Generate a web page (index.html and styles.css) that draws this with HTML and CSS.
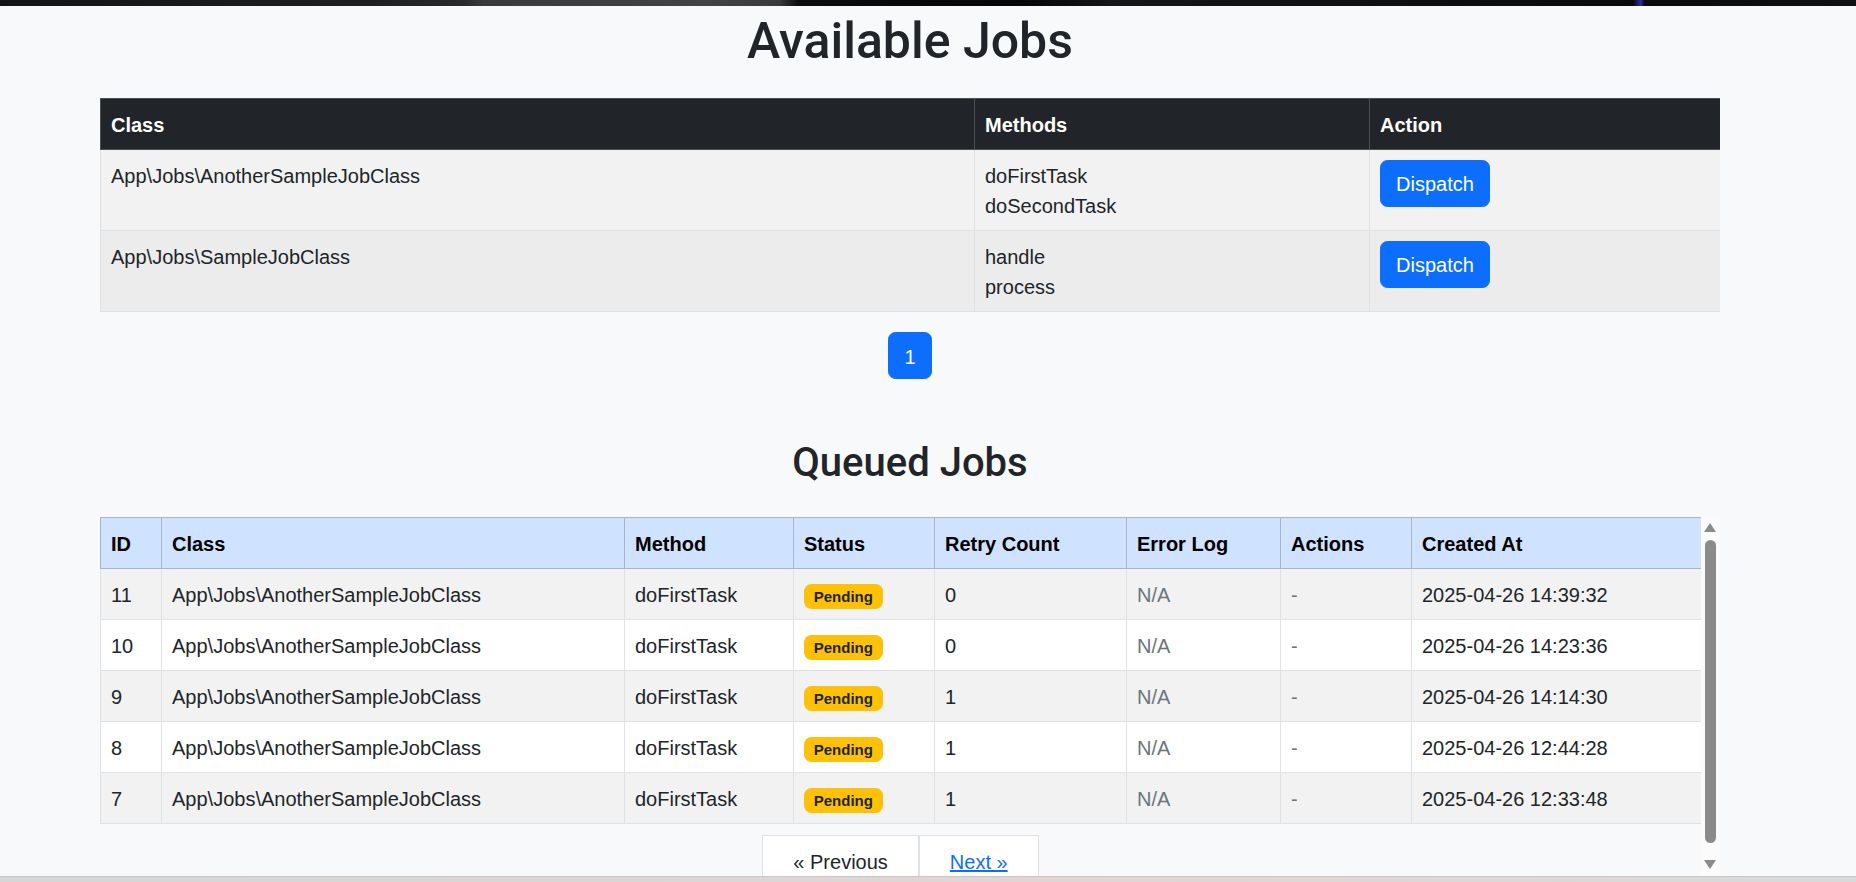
FILE: index.html
```html
<!DOCTYPE html>
<html lang="en">
<head>
<meta charset="utf-8">
<title>Jobs</title>
<link rel="stylesheet" href="styles.css">
</head>
<body>
<div class="topbar"></div>
<main class="page">
  <h1 class="title">Available Jobs</h1>
  <table class="tbl tbl-available">
    <colgroup>
      <col class="col-class">
      <col class="col-methods">
      <col class="col-action">
    </colgroup>
    <thead>
      <tr><th>Class</th><th>Methods</th><th>Action</th></tr>
    </thead>
    <tbody>
      <tr class="row-striped">
        <td>App\Jobs\AnotherSampleJobClass</td>
        <td><div>doFirstTask</div><div>doSecondTask</div></td>
        <td class="cell-action"><button class="btn-primary" type="button">Dispatch</button></td>
      </tr>
      <tr class="row-hover">
        <td>App\Jobs\SampleJobClass</td>
        <td><div>handle</div><div>process</div></td>
        <td class="cell-action"><button class="btn-primary" type="button">Dispatch</button></td>
      </tr>
    </tbody>
  </table>
  <nav class="pager">
    <span class="page-num">1</span>
  </nav>

  <h2 class="subtitle">Queued Jobs</h2>
  <div class="queue-area">
    <div class="queue-content">
      <table class="tbl tbl-queue">
        <colgroup>
          <col class="q-id">
          <col class="q-class">
          <col class="q-method">
          <col class="q-status">
          <col class="q-retry">
          <col class="q-error">
          <col class="q-actions">
          <col class="q-created">
        </colgroup>
        <thead>
          <tr><th>ID</th><th>Class</th><th>Method</th><th>Status</th><th>Retry Count</th><th>Error Log</th><th>Actions</th><th>Created At</th></tr>
        </thead>
        <tbody>
          <tr class="row-striped"><td>11</td><td>App\Jobs\AnotherSampleJobClass</td><td>doFirstTask</td><td><span class="badge">Pending</span></td><td>0</td><td class="muted">N/A</td><td class="muted">-</td><td>2025-04-26 14:39:32</td></tr>
          <tr class="row-plain"><td>10</td><td>App\Jobs\AnotherSampleJobClass</td><td>doFirstTask</td><td><span class="badge">Pending</span></td><td>0</td><td class="muted">N/A</td><td class="muted">-</td><td>2025-04-26 14:23:36</td></tr>
          <tr class="row-striped"><td>9</td><td>App\Jobs\AnotherSampleJobClass</td><td>doFirstTask</td><td><span class="badge">Pending</span></td><td>1</td><td class="muted">N/A</td><td class="muted">-</td><td>2025-04-26 14:14:30</td></tr>
          <tr class="row-plain"><td>8</td><td>App\Jobs\AnotherSampleJobClass</td><td>doFirstTask</td><td><span class="badge">Pending</span></td><td>1</td><td class="muted">N/A</td><td class="muted">-</td><td>2025-04-26 12:44:28</td></tr>
          <tr class="row-striped"><td>7</td><td>App\Jobs\AnotherSampleJobClass</td><td>doFirstTask</td><td><span class="badge">Pending</span></td><td>1</td><td class="muted">N/A</td><td class="muted">-</td><td>2025-04-26 12:33:48</td></tr>
        </tbody>
      </table>
      <nav class="simple-pager">
        <span class="sp-item sp-prev">« Previous</span>
        <a class="sp-item sp-next" href="#">Next »</a>
      </nav>
    </div>
    <div class="vscroll" aria-hidden="true">
      <div class="vs-btn vs-up"><span class="vs-arrow-up"></span></div>
      <div class="vs-track"><div class="vs-thumb"></div></div>
      <div class="vs-btn vs-down"><span class="vs-arrow-down"></span></div>
    </div>
  </div>
</main>
<div class="bottombar"></div>
</body>
</html>
```

FILE: styles.css
```css
* { box-sizing: border-box; }

html, body {
  margin: 0;
  padding: 0;
}

body {
  width: 1856px;
  height: 882px;
  overflow: hidden;
  background: #f8f9fa;
  color: #212529;
  font-family: "Segoe UI", "Liberation Sans", Arial, sans-serif;
  font-size: 20px;
  line-height: 30px;
}

.topbar {
  height: 6px;
  background: linear-gradient(90deg, #141414 0, #1f1f1f 20%, #2a2a2a 25%, #3a3a3a 26%, #434343 38%, #3a3a3a 42%, #0c0c0c 43%, #050505 55%, #161616 60%, #0a0a0a 88%, #2a2ab0 88.4%, #0a0a0a 88.6%, #111 100%);
}

.bottombar {
  height: 6px;
  background: linear-gradient(90deg, #d6d6d6 0, #dcd6d6 40%, #e2d4d4 55%, #d9d9d9 100%);
  border-top: 1px solid #c8c8c8;
}

.page {
  height: 870px;
  overflow: hidden;
  width: 1620px;
  margin-left: 100px;
  display: flex;
  flex-direction: column;
}

.title {
  margin: 5px 0 27px;
  font-family: Roboto, "Liberation Sans", sans-serif;
  font-size: 50px;
  line-height: 60px;
  font-weight: 500;
  text-align: center;
}

.subtitle {
  margin: 60px 0 30px;
  font-family: Roboto, "Liberation Sans", sans-serif;
  font-size: 40px;
  line-height: 48px;
  font-weight: 500;
  text-align: center;
}

.tbl {
  width: 100%;
  table-layout: fixed;
  border-collapse: collapse;
  border: 1px solid #dee2e6;
}

.tbl th,
.tbl td {
  padding: 11px 10px 9px;
  text-align: left;
  vertical-align: top;
  border: 1px solid #dee2e6;
  font-weight: 400;
}

.tbl th { font-weight: 700; }

.tbl td.cell-action {
  padding-top: 10px;
  padding-bottom: 10px;
}

.tbl-available thead th {
  background: #212529;
  color: #fff;
  border-color: #4d5154;
}

.col-class { width: 874px; }
.col-methods { width: 395px; }
.col-action { width: 351px; }

.row-striped td { background: #f2f2f2; }
.row-hover td { background: #ececec; }
.row-plain td { background: #fff; }

.btn-primary {
  display: inline-block;
  font: inherit;
  line-height: 30px;
  padding: 8px 15px 7px;
  color: #fff;
  background: #0d6efd;
  border: 1px solid #0d6efd;
  border-radius: 7.5px;
}

.pager {
  display: flex;
  justify-content: center;
  margin-top: 20px;
}

.page-num {
  display: block;
  padding: 8.5px 15px 6.5px;
  line-height: 30px;
  color: #fff;
  background: #0d6efd;
  border: 1px solid #0d6efd;
  border-radius: 7.5px;
}

.queue-area {
  display: flex;
  height: 359px;
  flex: none;
}

.queue-content {
  flex: 1;
  min-width: 0;
  overflow: hidden;
}

.vscroll {
  width: 19px;
  flex: none;
  display: flex;
  flex-direction: column;
  background: #fbfbfb;
}

.vs-btn {
  height: 20px;
  flex: none;
}

.vs-arrow-up,
.vs-arrow-down {
  display: block;
  width: 0;
  height: 0;
  margin-left: 3px;
  border-left: 6.5px solid transparent;
  border-right: 6.5px solid transparent;
}

.vs-arrow-up {
  margin-top: 6px;
  border-bottom: 9px solid #8b8b8b;
}

.vs-arrow-down {
  margin-top: 4px;
  border-top: 9px solid #8b8b8b;
}

.vs-track {
  flex: 1;
  padding: 3px 4px;
}

.vs-thumb {
  height: 303px;
  background: #8b8b8b;
  border-radius: 6px;
}

.tbl-queue thead th {
  background: #cfe2ff;
  color: #000;
  border-color: #a6b5cc;
}

.q-id { width: 61px; }
.q-class { width: 463px; }
.q-method { width: 169px; }
.q-status { width: 141px; }
.q-retry { width: 192px; }
.q-error { width: 154px; }
.q-actions { width: 131px; }
.q-created { width: 290px; }

.muted { color: #6c757d; }

.badge {
  display: inline-block;
  padding: 5.25px 9.75px;
  font-size: 15px;
  line-height: 1;
  font-weight: 700;
  color: #212529;
  background: #ffc107;
  border-radius: 7.5px;
}

.simple-pager {
  display: flex;
  justify-content: center;
  margin-top: 11px;
}

.sp-item {
  display: block;
  padding: 11px 30px 9px;
  line-height: 30px;
  background: #fff;
  border: 1px solid #dee2e6;
  color: #212529;
}

.sp-next {
  color: #0d6efd;
  text-decoration: underline;
}
```
